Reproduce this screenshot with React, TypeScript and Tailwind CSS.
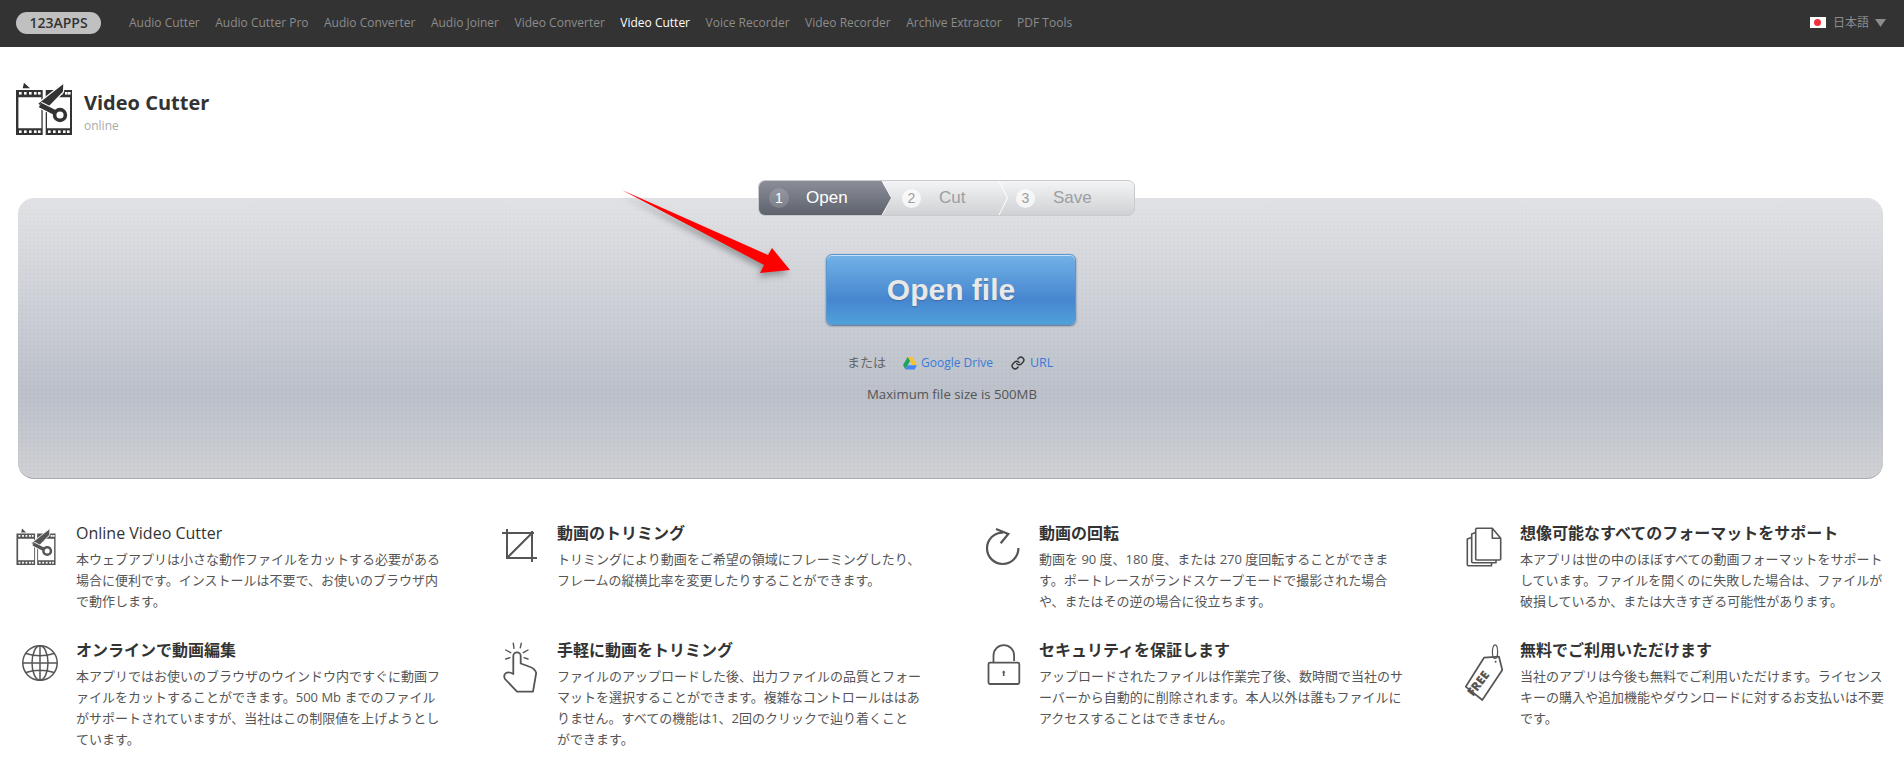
import React from 'react';
import { Link } from 'lucide-react';

const NAV_ITEMS = ['Audio Cutter', 'Audio Cutter Pro', 'Audio Converter', 'Audio Joiner', 'Video Converter', 'Video Cutter', 'Voice Recorder', 'Video Recorder', 'Archive Extractor', 'PDF Tools'];

const FilmCutIcon: React.FC<{ className: string }> = ({ className }) => (
    <svg viewBox="0 0 56 53" fill="currentColor" className={className}>
        <path fillRule="evenodd" d="M0 8h26.7v45H0zM2.4 15.3v31h23v-31zM29.7 8H56v45H29.7zM31 15.3v31h23v-31z" />
        <path d="M8 .7L14 6.3H6.7z" />
        <g fill="#fff">
            {[3, 8, 13, 18, 22].map(x => <rect key={x} x={x} y="10" width="2.6" height="2.6" />)}
            {[3, 8, 13, 18, 22].map(x => <rect key={x} x={x} y="48.4" width="2.6" height="2.6" />)}
            {[39, 44, 49, 52].map(x => <rect key={x} x={x} y="10" width="2.6" height="2.6" />)}
            {[32, 37, 42, 47, 51].map(x => <rect key={x} x={x} y="48.4" width="2.6" height="2.6" />)}
        </g>
        <path d="M48 .7L47.5 10L29 29L21.5 21.5z" stroke="#fff" strokeWidth="1.2" />
        <path d="M24 23L40 31" stroke="#fff" strokeWidth="7" />
        <path d="M24 23L40 31" stroke="currentColor" strokeWidth="5" />
        <circle cx="44" cy="33" r="5.4" fill="#fff" stroke="currentColor" strokeWidth="3.6" />
    </svg>
);

const CropIcon = () => (
    <svg width="48" height="48" fill="none" stroke="#555" strokeWidth="2">
        <path d="M10 7V36H40M5 11H37M35 9V40M10 36L35 11" />
    </svg>
);

const GlobeIcon = () => (
    <svg width="48" height="48" fill="none" stroke="#555" strokeWidth="1.5">
        <circle cx="24" cy="24" r="17.2" />
        <ellipse cx="24" cy="24" rx="8" ry="17.2" />
        <path d="M24 7V41M7 24H41M10 14.5Q24 19 38 14.5M10 33.5Q24 29 38 33.5" />
    </svg>
);

const HandIcon = () => (
    <svg width="48" height="56" fill="none" stroke="#555" strokeWidth="1.8" strokeLinejoin="round" strokeLinecap="round">
        <path d="M16.3 34.5V17a3.7 3.7 0 0 1 7.4 0V24.5L32 27.5q6 2 7.2 6.5L36 52.7H20L8 40q-2-4 1-6q3-1.5 7.3 1" />
        <path d="M16.3 4.3L17 9.3M24.3 4.3L23.3 8.7M8.7 11L13.7 13.7M8.7 20L13 18.7M31 11L26.3 13.7M31 20L27 18.7" strokeWidth="1.4" />
    </svg>
);

const RotateIcon = () => (
    <svg width="48" height="48" fill="none" stroke="#555" strokeWidth="2.2">
        <path d="M24 10.6A15.7 15.7 0 1 0 39.4 26" />
        <path d="M17 7L29.3 12L21.7 21.3" />
    </svg>
);

const LockIcon = () => (
    <svg width="48" height="48" fill="none" stroke="#555" strokeWidth="1.8">
        <rect x="9.5" y="23.7" width="30.8" height="21.3" rx="1.5" />
        <path d="M14.5 23.7V16.5a10.3 10.3 0 0 1 20.6 0V22" />
        <path d="M24.7 37V32.5" strokeWidth="1.6" />
        <path d="M22.9 33.6L24.7 31.4L26.5 33.6z" fill="#555" stroke="none" />
    </svg>
);

const PagesIcon = () => (
    <svg width="48" height="48" fill="none" stroke="#555" strokeWidth="1.6" strokeLinejoin="round">
        <path d="M15.7 7.5a1.2 1.2 0 0 1 1.2-1.2H32.3L40.7 16.3V36.8a1.2 1.2 0 0 1-1.2 1.2H16.9a1.2 1.2 0 0 1-1.2-1.2z" />
        <path d="M32.3 6.3V16.3H40.7" />
        <path d="M15.7 10.5L11.7 12V39.5a1.2 1.2 0 0 0 1.2 1.2H36V38" />
        <path d="M11.7 15.5L7.3 17V42.5a1.2 1.2 0 0 0 1.2 1.2H31.5V40.7" />
    </svg>
);

const TagIcon = () => (
    <svg width="48" height="64" fill="none" stroke="#555" strokeWidth="1.7" strokeLinejoin="round">
        <ellipse cx="35" cy="12.7" rx="2.6" ry="6.8" strokeWidth="1.2" />
        <path d="M5.7 47.7L22.3 61L42.3 31L39 17.7L24 18.7z" />
        <circle cx="35.6" cy="22.7" r="1" fill="#555" stroke="none" />
        <text x="0" y="0" transform="translate(21.5 47) rotate(-53)" fill="#555" stroke="none" fontSize="12" fontWeight="800" textAnchor="middle" fontFamily="Open Sans, sans-serif">FREE</text>
    </svg>
);

const DriveIcon = () => (
    <svg width="14" height="13" viewBox="0 0 14 13">
        <path d="M4.7 0H9.3L14 8H9.4z" fill="#f6c429" />
        <path d="M4.7 0L0 8L2.3 12.2L7 4z" fill="#1ea362" />
        <path d="M4.7 8.2H14L11.7 12.4H2.4z" fill="#4486f4" />
    </svg>
);

interface Feature {
    title: string;
    lines: string[];
    icon: React.ReactNode;
}

const FEATURES: Feature[] = [
    { title: 'Online Video Cutter', lines: ['本ウェブアプリは小さな動作ファイルをカットする必要がある', '場合に便利です。インストールは不要で、お使いのブラウザ内', 'で動作します。'], icon: <FilmCutIcon className="w-10 h-[37px] mt-[6px] text-[#555]" /> },
    { title: '動画のトリミング', lines: ['トリミングにより動画をご希望の領域にフレーミングしたり、', 'フレームの縦横比率を変更したりすることができます。'], icon: <CropIcon /> },
    { title: '動画の回転', lines: ['動画を 90 度、180 度、または 270 度回転することができま', 'す。ポートレースがランドスケープモードで撮影された場合', 'や、またはその逆の場合に役立ちます。'], icon: <RotateIcon /> },
    { title: '想像可能なすべてのフォーマットをサポート', lines: ['本アプリは世の中のほぼすべての動画フォーマットをサポート', 'しています。ファイルを開くのに失敗した場合は、ファイルが', '破損しているか、または大きすぎる可能性があります。'], icon: <PagesIcon /> },
    { title: 'オンラインで動画編集', lines: ['本アプリではお使いのブラウザのウインドウ内ですぐに動画フ', 'ァイルをカットすることができます。500 Mb までのファイル', 'がサポートされていますが、当社はこの制限値を上げようとし', 'ています。'], icon: <GlobeIcon /> },
    { title: '手軽に動画をトリミング', lines: ['ファイルのアップロードした後、出力ファイルの品質とフォー', 'マットを選択することができます。複雑なコントロールははあ', 'りません。すべての機能は1、2回のクリックで辿り着くこと', 'ができます。'], icon: <HandIcon /> },
    { title: 'セキュリティを保証します', lines: ['アップロードされたファイルは作業完了後、数時間で当社のサ', 'ーバーから自動的に削除されます。本人以外は誰もファイルに', 'アクセスすることはできません。'], icon: <LockIcon /> },
    { title: '無料でご利用いただけます', lines: ['当社のアプリは今後も無料でご利用いただけます。ライセンス', 'キーの購入や追加機能やダウンロードに対するお支払いは不要', 'です。'], icon: <TagIcon /> },
];

const StepBar = () => (
    <div className="relative z-10 ml-[758px] -mb-[18px] w-[377px] h-[36px] flex rounded-[7px] border border-[#c8cacd] bg-gradient-to-b from-[#f3f4f5] to-[#cfd1d4] overflow-hidden [font-family:'Liberation_Sans',sans-serif]">
        <div className="w-[133px] shrink-0 -ml-px -my-px flex items-center pl-[11px] bg-gradient-to-b from-[#8d909a] to-[#5d616c] text-white [clip-path:polygon(0_0,123px_0,133px_50%,123px_100%,0_100%)]">
            <span className="w-5 h-5 rounded-full bg-white/15 flex items-center justify-center text-[14px]">1</span>
            <span className="ml-[17px] text-[17px] -mt-px">Open</span>
        </div>
        <svg width="11" height="36" fill="none" stroke="#fff" className="-ml-[10px] -mt-px shrink-0"><path d="M.5 0L10 18L.5 36" /></svg>
        <div className="w-[106px] shrink-0 flex items-center pl-[10px] text-[#9c9ea1]">
            <span className="w-[19px] h-[19px] rounded-full bg-white/70 flex items-center justify-center text-[14px]">2</span>
            <span className="ml-[18px] text-[17px] -mt-px">Cut</span>
        </div>
        <svg width="10" height="36" fill="none" stroke="#fff" className="-mt-px shrink-0"><path d="M.5 0L9.5 18L.5 36" /></svg>
        <div className="flex items-center pl-[8px] text-[#9c9ea1]">
            <span className="w-[19px] h-[19px] rounded-full bg-white/70 flex items-center justify-center text-[14px]">3</span>
            <span className="ml-[18px] text-[17px] -mt-px">Save</span>
        </div>
    </div>
);

export default function App() {
    return (
        <div className="relative h-[777px] overflow-hidden bg-white [font-family:'Open_Sans','Noto_Sans_CJK_JP',sans-serif]">
            <header className="h-[47px] bg-[#333] flex items-center pl-4 pr-[18px] pb-[2px] text-[12px]">
                <div className="w-[85px] h-[22px] rounded-full bg-[#c0c0c0] text-[#333] text-[14px] font-semibold flex items-center justify-center">123APPS</div>
                <nav className="ml-[28px] flex gap-[15.5px]">
                    {NAV_ITEMS.map(item => (
                        <span key={item} className={item === 'Video Cutter' ? 'text-white' : 'text-[#8c8c8c]'}>{item}</span>
                    ))}
                </nav>
                <div className="ml-auto flex items-center text-[#8c8c8c]">
                    <div className="w-4 h-[11px] bg-white flex items-center justify-center">
                        <span className="w-[7px] h-[7px] rounded-full bg-[#f0303a]" />
                    </div>
                    <span className="ml-[7px]">日本語</span>
                    <svg width="11" height="8" className="ml-[6px]"><path d="M0 0H11L5.5 8z" fill="#8c8c8c" /></svg>
                </div>
            </header>

            <div className="flex items-start pl-4 pt-[35px] h-[133px]">
                <FilmCutIcon className="w-14 h-[53px] text-[#333]" />
                <div className="ml-3 mt-[7px]">
                    <h1 className="text-[20px] leading-[27px] font-bold text-[#333]">Video Cutter</h1>
                    <div className="text-[12px] leading-4 mt-[2px] text-[#aaa]">online</div>
                </div>
            </div>

            <StepBar />

            <section className="ml-[18px] mr-[21px] h-[281px] rounded-[16px] border-b border-[#a9acb0] flex flex-col items-start text-[13px] bg-[image:radial-gradient(rgba(255,255,255,0.08)_1px,transparent_1px),linear-gradient(to_bottom,#e0e1e4,#b9bec8_70%,#cdcfd2)] bg-[length:4px_4px,100%_100%]">
                <button className="ml-[808px] mt-[56px] w-[250px] h-[71px] rounded-[6px] border border-[#5b97cf] bg-gradient-to-b from-[#72b2e6] via-[#4686cf] via-[65%] to-[#50a0da] shadow-[inset_0_1px_0_rgba(255,255,255,0.6),0_1px_2px_rgba(40,70,110,0.7)] text-[#e8e8e8] text-[30px] font-bold [font-family:'Liberation_Sans',sans-serif] [text-shadow:0_1px_1px_rgba(60,90,130,0.6)]">
                    Open file
                </button>
                <div className="ml-[829px] mt-[28px] h-5 flex items-center text-[#666]">
                    <span>または</span>
                    <span className="ml-[17px]"><DriveIcon /></span>
                    <span className="ml-[4px] text-[12px] text-[#3a7bd5]">Google Drive</span>
                    <Link size={14} strokeWidth={2.4} className="ml-[18px] text-[#333]" />
                    <span className="ml-[5px] text-[12.5px] text-[#3a7bd5]">URL</span>
                </div>
                <div className="ml-[849px] mt-[11px] h-5 leading-5 text-[13.2px] text-[#555]">Maximum file size is 500MB</div>
            </section>

            <div className="mt-[43px] pl-4 grid grid-cols-[481px_482px_481px_1fr] auto-rows-[117px]">
                {[0, 1].map(row => [0, 1, 2, 3].map(col => {
                    const f = FEATURES[row * 4 + col];
                    return (
                        <div key={f.title} className="flex">
                            <div className="w-[60px] shrink-0">{f.icon}</div>
                            <div>
                                <h3 className={`text-[16px] leading-[22px] text-[#333] ${f.title === 'Online Video Cutter' ? 'font-medium' : 'font-semibold'}`}>{f.title}</h3>
                                <p className="mt-[5px] text-[13px] leading-[21px] text-[#555] whitespace-nowrap">
                                    {f.lines.map(line => <span key={line} className="block">{line}</span>)}
                                </p>
                            </div>
                        </div>
                    );
                }))}
            </div>

            {/* red marker arrow drawn over the page */}
            <svg width="190" height="105" viewBox="610 180 190 105" className="absolute left-[610px] top-[180px] pointer-events-none drop-shadow-[-2px_4px_3px_rgba(0,0,0,0.3)]">
                <path d="M622 190L768 255L772 248L790 270L760 273L764 265z" fill="#f00" />
            </svg>
        </div>
    );
}
